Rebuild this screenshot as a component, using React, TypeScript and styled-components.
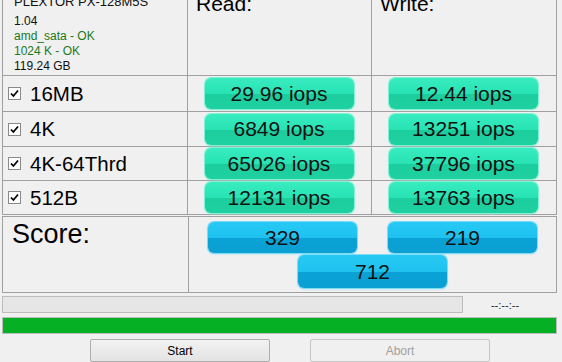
import { Fragment } from 'react'
import styled, { createGlobalStyle, css } from 'styled-components'

const Global = createGlobalStyle`
  html, body { margin: 0; padding: 0; background: #f0f0f0; overflow: hidden; }
  body { font-family: "Liberation Sans", Arial, sans-serif; color: #000; }
`

const Window = styled.div`
  width: 555px; height: 362px; margin-left: 2px;
  display: flex; flex-direction: column;
`
const Results = styled.div`
  margin-top: -14px;
  display: grid; grid-template-columns: 185px 184px 185px;
  border-left: 1px solid #a0a0a0;
`
const Cell = styled.div<{ $h: number }>`
  height: ${({ $h }) => $h}px; box-sizing: border-box;
  border-right: 1px solid #a0a0a0; border-bottom: 1px solid #a0a0a0;
  display: flex; align-items: center;
`
const InfoCell = styled(Cell)`
  flex-direction: column; align-items: flex-start;
  padding: 8px 0 0 11px;
`
const Model = styled.div`font-size: 13px; line-height: 16px; color: #111; margin-bottom: 4px;`
const Info = styled.div<{ $ok?: boolean }>`
  font-size: 12px; line-height: 15px;
  color: ${({ $ok }) => ($ok ? '#1c7a1c' : '#111')};
`
const HeadCell = styled(Cell)`
  align-items: flex-start; padding: 6px 0 0 8px;
  font-size: 21px; line-height: 24px;
`
const LabelCell = styled(Cell)`padding-left: 5px; gap: 9px; font-size: 20.5px;`
const Check = styled.span`
  width: 11px; height: 11px; border: 1px solid #8a8a8a; background: #fff;
  display: inline-flex; align-items: center; justify-content: center;
`
const ValueCell = styled(Cell)`justify-content: center; padding-right: 1px;`

const Pill = styled.div<{ $blue?: boolean; $h?: number }>`
  width: 149px; height: ${({ $h }) => $h ?? 31}px; box-sizing: border-box;
  border-radius: 6px;
  display: flex; align-items: center; justify-content: center;
  font-size: 21px; color: #111;
  ${({ $blue }) => $blue
    ? css`
      background: linear-gradient(#27c9f4 0%, #1fc1ef 50%, #0aa2d6 52%, #0c9fd2 100%);
      box-shadow: 0 0 0 1px #7fdcf7, 0 1px 2px #8fd8f0;
    `
    : css`
      background: linear-gradient(#38ecc0 0%, #28e3b3 50%, #1ccd9e 52%, #1fd0a0 100%);
      box-shadow: 0 0 0 1px #82f2d4, 0 1px 2px #9cf0d8;
    `}
`

const ScoreBox = styled.div`
  margin-top: 1px; height: 80px; box-sizing: border-box;
  border: 1px solid #a0a0a0;
  display: grid; grid-template-columns: 186px 1fr;
`
const ScoreLabel = styled.div`
  border-right: 1px solid #a0a0a0;
  padding: 2px 0 0 9px; font-size: 27px; line-height: 30px;
`
const ScoreGrid = styled.div`
  display: grid; grid-template-columns: 149px 149px; column-gap: 31px; row-gap: 2px;
  padding: 5px 19px 0 19px; align-content: start;
`
const Total = styled.div`grid-column: 1 / span 2; justify-self: center;`

const ProgressRow = styled.div`margin-top: 3px; display: flex; align-items: center;`
const Bar = styled.div`
  width: 461px; height: 17px; box-sizing: border-box;
  border: 1px solid #bcbcbc; background: #e6e6e6;
`
const Time = styled.div`flex: 1; text-align: center; font-size: 11px; color: #222; padding-right: 10px;`
const Done = styled.div`
  margin-top: 4px; height: 17px; box-sizing: border-box;
  border: 1px solid #bcbcbc; background: #06b025;
`
const Buttons = styled.div`margin-top: 5px; padding-left: 88px; display: flex; gap: 40px;`
const Button = styled.button<{ disabled?: boolean }>`
  width: 180px; height: 23px; padding: 0;
  font-family: "Liberation Sans", Arial, sans-serif; font-size: 12px;
  border: 1px solid ${({ disabled }) => (disabled ? '#c6c6c6' : '#adadad')};
  background: ${({ disabled }) => (disabled ? '#f0f0f0' : 'linear-gradient(#f2f2f2, #e3e3e3)')};
  color: ${({ disabled }) => (disabled ? '#a0a0a0' : '#000')};
  border-radius: 2px;
`

const rows = [
  { name: '16MB', read: '29.96 iops', write: '12.44 iops', h: 36 },
  { name: '4K', read: '6849 iops', write: '13251 iops', h: 35 },
  { name: '4K-64Thrd', read: '65026 iops', write: '37796 iops', h: 34 },
  { name: '512B', read: '12131 iops', write: '13763 iops', h: 34 },
]

const Tick = () => (
  <svg width="9" height="9" viewBox="0 0 9 9">
    <path d="M1 4.5 L3.4 7 L8 1.5" fill="none" stroke="#000" strokeWidth="1.8" />
  </svg>
)

export default function App() {
  return (
    <>
      <Global />
      <Window>
        <Results>
          <InfoCell $h={90}>
            <Model>PLEXTOR PX-128M5S</Model>
            <Info>1.04</Info>
            <Info $ok>amd_sata - OK</Info>
            <Info $ok>1024 K - OK</Info>
            <Info>119.24 GB</Info>
          </InfoCell>
          <HeadCell $h={90}>Read:</HeadCell>
          <HeadCell $h={90}>Write:</HeadCell>
          {rows.map((r) => (
            <Fragment key={r.name}>
              <LabelCell $h={r.h}><Check><Tick /></Check>{r.name}</LabelCell>
              <ValueCell $h={r.h}><Pill>{r.read}</Pill></ValueCell>
              <ValueCell $h={r.h}><Pill>{r.write}</Pill></ValueCell>
            </Fragment>
          ))}
        </Results>
        <ScoreBox>
          <ScoreLabel>Score:</ScoreLabel>
          <ScoreGrid>
            <Pill $blue>329</Pill>
            <Pill $blue>219</Pill>
            <Total><Pill $blue $h={33}>712</Pill></Total>
          </ScoreGrid>
        </ScoreBox>
        <ProgressRow>
          <Bar />
          <Time>--:--:--</Time>
        </ProgressRow>
        <Done />
        <Buttons>
          <Button>Start</Button>
          <Button disabled>Abort</Button>
        </Buttons>
      </Window>
    </>
  )
}
